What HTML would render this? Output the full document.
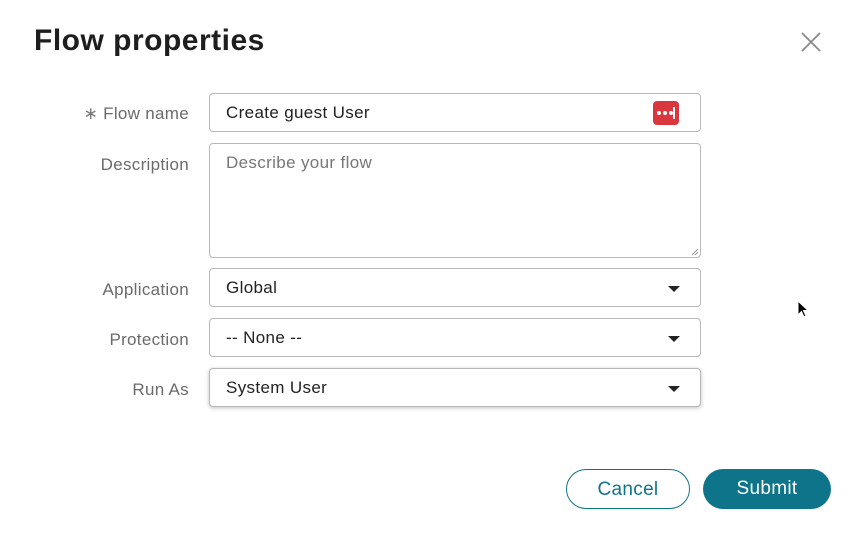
<!DOCTYPE html>
<html><head><style>
body{margin:0;width:853px;height:537px;background:#fff;font-family:"Liberation Sans",sans-serif;position:relative;overflow:hidden}
.t{position:absolute;left:34px;top:24px;font-size:30px;font-weight:bold;color:#1e1e1e;letter-spacing:0.5px}
.lab{position:absolute;right:664px;font-size:17px;color:#6b6b6b;white-space:nowrap;letter-spacing:0.3px}
.box{position:absolute;left:209px;width:492px;border:1px solid #b8b8b8;border-radius:4px;background:#fff;box-sizing:border-box}
.v{position:absolute;left:16px;top:9px;font-size:17px;color:#222;letter-spacing:0.35px}
.ar{position:absolute;right:20px;top:17px;width:0;height:0;border-left:6px solid transparent;border-right:6px solid transparent;border-top:6px solid #222}
.btn{position:absolute;top:469px;height:40px;border-radius:20px;font-size:19px;text-align:center;line-height:40px;box-sizing:border-box;letter-spacing:0.3px}
</style></head><body>
<div class="t">Flow properties</div>
<svg style="position:absolute;left:801px;top:32px" width="20" height="20"><path d="M1 1L19 19M19 1L1 19" stroke="#8a8a8a" stroke-width="1.8"/></svg>
<div class="lab" style="top:104px"><span style="color:#777;font-weight:300">∗</span> Flow name</div>
<div class="lab" style="top:155px">Description</div>
<div class="lab" style="top:280px">Application</div>
<div class="lab" style="top:330px">Protection</div>
<div class="lab" style="top:380px">Run As</div>
<div class="box" style="top:93px;height:39px"><div class="v">Create guest User</div>
<div style="position:absolute;left:443px;top:7px;width:26px;height:24px;background:#d9363e;border-radius:4px"><div style="position:absolute;left:4px;top:10px;color:#fff;font-size:0">
<span style="display:inline-block;width:4px;height:4px;background:#fff;border-radius:2px;margin-right:2px"></span><span style="display:inline-block;width:4px;height:4px;background:#fff;border-radius:2px;margin-right:2px"></span><span style="display:inline-block;width:4px;height:4px;background:#fff;border-radius:2px;margin-right:2px"></span></div><div style="position:absolute;left:20px;top:6px;width:2px;height:12px;background:#fff"></div></div></div>
<div class="box" style="top:143px;height:115px"><div class="v" style="color:#777">Describe your flow</div>
<svg style="position:absolute;right:1px;bottom:1px" width="8" height="8"><path d="M7 1L1 7M7 4L4 7" stroke="#999" stroke-width="1"/></svg></div>
<div class="box" style="top:268px;height:39px"><div class="v">Global</div><div class="ar"></div></div>
<div class="box" style="top:318px;height:39px"><div class="v">-- None --</div><div class="ar"></div></div>
<div class="box" style="top:368px;height:39px;box-shadow:0 1px 4px rgba(0,0,0,.25)"><div class="v">System User</div><div class="ar"></div></div>
<div class="btn" style="left:566px;width:124px;border:1px solid #0e7489;color:#0e7489">Cancel</div>
<div class="btn" style="left:703px;width:128px;background:#0e7489;color:#fff">Submit</div>
<svg style="position:absolute;left:797px;top:300px" width="12" height="20"><path d="M1 1L1 15L4.5 11.5L7 17L9 16L6.5 10.5L11 10.5Z" fill="#000" stroke="#fff" stroke-width="1"/></svg>
</body></html>
